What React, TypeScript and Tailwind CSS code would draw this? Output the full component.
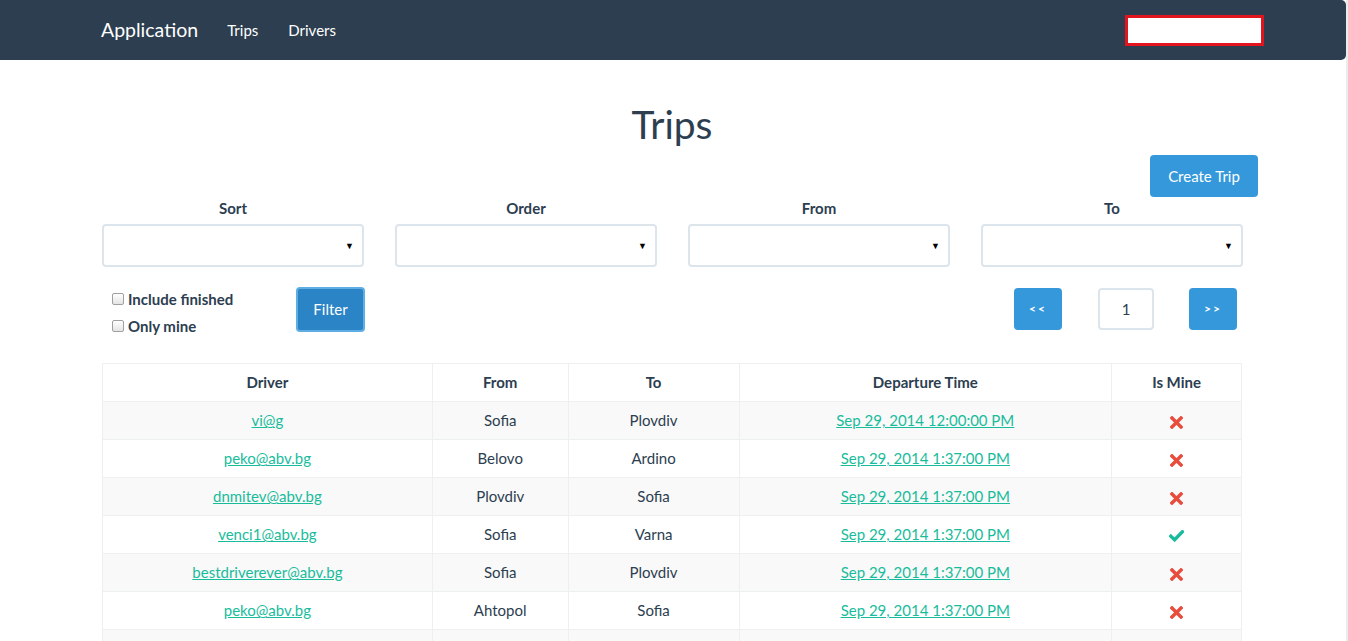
import React from 'react';

const TRIPS = [
  { driver: 'vi@g', from: 'Sofia', to: 'Plovdiv', time: 'Sep 29, 2014 12:00:00 PM', mine: false },
  { driver: 'peko@abv.bg', from: 'Belovo', to: 'Ardino', time: 'Sep 29, 2014 1:37:00 PM', mine: false },
  { driver: 'dnmitev@abv.bg', from: 'Plovdiv', to: 'Sofia', time: 'Sep 29, 2014 1:37:00 PM', mine: false },
  { driver: 'venci1@abv.bg', from: 'Sofia', to: 'Varna', time: 'Sep 29, 2014 1:37:00 PM', mine: true },
  { driver: 'bestdriverever@abv.bg', from: 'Sofia', to: 'Plovdiv', time: 'Sep 29, 2014 1:37:00 PM', mine: false },
  { driver: 'peko@abv.bg', from: 'Ahtopol', to: 'Sofia', time: 'Sep 29, 2014 1:37:00 PM', mine: false },
];

const FILTERS = ['Sort', 'Order', 'From', 'To'];

const RemoveIcon = () => (
  <svg width="13" height="13" viewBox="0 0 13 13" className="inline-block">
    <path d="M2 2 L11 11 M11 2 L2 11" stroke="#e74c3c" strokeWidth="3.4" strokeLinecap="square" />
  </svg>
);

const CheckIcon = () => (
  <svg width="15" height="12" viewBox="0 0 15 12" className="inline-block">
    <path d="M1.8 6.2 L5.6 9.8 L13.4 1.8" stroke="#18bc9c" strokeWidth="3.4" fill="none" strokeLinecap="square" />
  </svg>
);

const Select = () => (
  <div className="h-[43px] rounded-[4px] border-2 border-[#dce4ec] bg-white flex items-center justify-end pr-[8px]">
    <span className="text-[9px] text-black">▼</span>
  </div>
);

export default function App() {
  return (
    <div className="flex min-h-[641px] bg-white font-['Lato','Noto_Sans',sans-serif] text-[15px] text-[#2c3e50]">
      <div className="w-[1346px] overflow-hidden">
        {/* navbar */}
        <nav className="h-[60px] bg-[#2c3e50] rounded-r-[5px]">
          <div className="w-[1140px] mx-auto h-full flex items-center">
            <span className="text-[19.5px] text-white -ml-[2px] mr-[29px]">Application</span>
            <span className="text-white mr-[30px]">Trips</span>
            <span className="text-white">Drivers</span>
            <div className="ml-auto mr-[-21px] w-[139px] h-[31px] border-[3px] border-[#e2151f] bg-white" />
          </div>
        </nav>

        <main className="w-[1140px] mx-auto">
          <h1 className="text-[39px] leading-[1.1] text-center mt-[43px] -ml-[2px]">Trips</h1>

          <div className="flex justify-end mt-[9px] mr-[-15px]">
            <button className="h-[42px] px-[16px] w-[108px] rounded-[4px] bg-[#3498db] text-white text-[15px]">Create Trip</button>
          </div>

          <div className="grid grid-cols-4 gap-x-[31px] -ml-[1px] mt-[1px]">
            {FILTERS.map((f) => (
              <div key={f} className="flex flex-col">
                <label className="font-bold text-center leading-[21px] mb-[5px]">{f}</label>
                <Select />
              </div>
            ))}
          </div>

          <div className="flex items-start mt-[20px]">
            <div className="w-[263px] flex items-start justify-between -ml-[1px]">
              <div className="flex flex-col pl-[10px] -mt-[1px]">
                <label className="flex items-center gap-[4px] font-bold leading-[27px]">
                  <span className="w-[12px] h-[12px] rounded-[2px] border border-[#a0a0a0] bg-gradient-to-b from-white to-[#e4e4e4]" />
                  Include finished
                </label>
                <label className="flex items-center gap-[4px] font-bold leading-[27px]">
                  <span className="w-[12px] h-[12px] rounded-[2px] border border-[#a0a0a0] bg-gradient-to-b from-white to-[#e4e4e4]" />
                  Only mine
                </label>
              </div>
              <button className="w-[69px] h-[45px] rounded-[4px] bg-[#2a84c6] border-2 border-[#5faee3] text-white">Filter</button>
            </div>

            <div className="ml-auto flex items-center mt-[1px] mr-[6px]">
              <button className="w-[48px] h-[42px] rounded-[4px] bg-[#3498db] text-white text-[12px] font-bold tracking-[2px]">&lt;&lt;</button>
              <div className="w-[56px] h-[42px] ml-[36px] mr-[35px] rounded-[4px] border-2 border-[#dce4ec] flex items-center justify-center">1</div>
              <button className="w-[48px] h-[42px] rounded-[4px] bg-[#3498db] text-white text-[12px] font-bold tracking-[2px]">&gt;&gt;</button>
            </div>
          </div>

          <table className="mt-[23px] -ml-[1px] w-[1140px] border-collapse border border-[#ecf0f1] text-center">
            <colgroup>
              <col className="w-[330px]" />
              <col className="w-[136px]" />
              <col className="w-[171px]" />
              <col className="w-[373px]" />
              <col className="w-[130px]" />
            </colgroup>
            <thead>
              <tr className="h-[38px]">
                {['Driver', 'From', 'To', 'Departure Time', 'Is Mine'].map((h) => (
                  <th key={h} className="border border-[#ecf0f1] font-bold">{h}</th>
                ))}
              </tr>
            </thead>
            <tbody>
              {TRIPS.map((t, i) => (
                <tr key={i} className={`h-[38px] ${i % 2 === 0 ? 'bg-[#f9f9f9]' : 'bg-white'}`}>
                  <td className="border border-[#ecf0f1]">
                    <a className="text-[#18bc9c] underline">{t.driver}</a>
                  </td>
                  <td className="border border-[#ecf0f1]">{t.from}</td>
                  <td className="border border-[#ecf0f1]">{t.to}</td>
                  <td className="border border-[#ecf0f1]">
                    <a className="text-[#18bc9c] underline">{t.time}</a>
                  </td>
                  <td className="border border-[#ecf0f1]">{t.mine ? <CheckIcon /> : <RemoveIcon />}</td>
                </tr>
              ))}
              <tr className="h-[38px] bg-[#f9f9f9]">
                <td className="border border-[#ecf0f1]" />
                <td className="border border-[#ecf0f1]" />
                <td className="border border-[#ecf0f1]" />
                <td className="border border-[#ecf0f1]" />
                <td className="border border-[#ecf0f1]" />
              </tr>
            </tbody>
          </table>
        </main>
      </div>
      <div className="w-[2px] bg-[#ececec]" />
    </div>
  );
}
